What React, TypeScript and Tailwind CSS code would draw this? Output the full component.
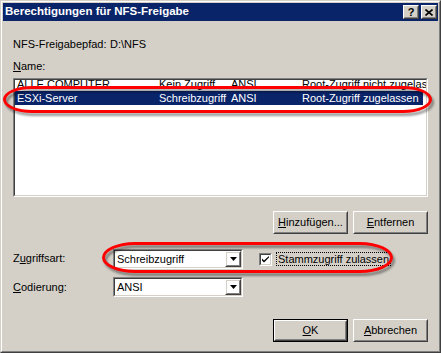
import React from "react";

const raisedOuter = "border border-t-white border-l-white border-r-[#404040] border-b-[#404040]";
const raisedInner = "border border-t-[#D4D0C8] border-l-[#D4D0C8] border-r-[#808080] border-b-[#808080]";
const sunkenOuter = "border border-t-[#808080] border-l-[#808080] border-r-white border-b-white";
const sunkenInner = "border border-t-[#404040] border-l-[#404040] border-r-[#D4D0C8] border-b-[#D4D0C8]";

function Btn({ children, isDefault }: { children: React.ReactNode; isDefault?: boolean }) {
  const inner = (
    <div className={`${raisedOuter} w-full h-full`}>
      <div className={`${raisedInner} w-full h-full flex items-center justify-center text-[11px] text-black`}>
        {children}
      </div>
    </div>
  );
  return (
    <div className={`w-[75px] h-[23px] ${isDefault ? "border border-black" : ""}`}>{inner}</div>
  );
}

function Arrow() {
  return (
    <div className={`${raisedOuter} w-[16px] h-[16px]`}>
      <div className={`${raisedInner} w-full h-full flex items-center justify-center`}>
        <svg width="7" height="4" viewBox="0 0 7 4">
          <path d="M0 0h7L3.5 4z" fill="#000" />
        </svg>
      </div>
    </div>
  );
}

function Combo({ value }: { value: string }) {
  return (
    <div className={`${sunkenOuter} w-[130px] h-[20px]`}>
      <div className={`${sunkenInner} w-full h-full bg-white flex items-center justify-between`}>
        <span className="pl-[2px] text-[11px] text-black leading-none">{value}</span>
        <Arrow />
      </div>
    </div>
  );
}

function TitleBtn({ children }: { children: React.ReactNode }) {
  return (
    <div className={`${raisedOuter} w-[16px] h-[14px] bg-[#D4D0C8]`}>
      <div className={`${raisedInner} w-full h-full flex items-center justify-center`}>{children}</div>
    </div>
  );
}

const rows = [
  { name: "ALLE COMPUTER", access: "Kein Zugriff", enc: "ANSI", root: "Root-Zugriff nicht zugelassen", sel: false },
  { name: "ESXi-Server", access: "Schreibzugriff", enc: "ANSI", root: "Root-Zugriff zugelassen", sel: true },
];

export default function App() {
  return (
    <div className="relative w-[441px] h-[353px] font-['Liberation_Sans',Arial,sans-serif] select-none">
      <div className="w-full h-full border border-t-[#D4D0C8] border-l-[#D4D0C8] border-r-[#404040] border-b-[#404040] bg-[#D4D0C8]">
        <div className="w-full h-full border border-t-white border-l-white border-r-[#808080] border-b-[#808080] p-px flex flex-col">
          {/* Title bar */}
          <div className="h-[18px] bg-[#0A246A] flex items-center justify-between pl-[2px] pr-[1px]">
            <span className="text-white font-bold text-[11.5px] leading-none">Berechtigungen für NFS-Freigabe</span>
            <div className="flex gap-[2px]">
              <TitleBtn>
                <span className="text-[11px] font-bold leading-none text-black">?</span>
              </TitleBtn>
              <TitleBtn>
                <svg width="8" height="7" viewBox="0 0 8 7">
                  <path d="M0.5 0.5L7.5 6.5M7.5 0.5L0.5 6.5" stroke="#000" strokeWidth="1.6" />
                </svg>
              </TitleBtn>
            </div>
          </div>

          {/* Body */}
          <div className="flex flex-col px-[10px] text-[11px] text-black">
            <div className="mt-[17px] h-[13px] leading-[13px] flex">
              <span className="w-[97px]">NFS-Freigabepfad:</span>
              <span>D:\NFS</span>
            </div>
            <div className="mt-[9px] h-[13px] leading-[13px]">
              <span className="underline">N</span>ame:
            </div>
            <div className={`mt-[5px] ${sunkenOuter} h-[119px] w-full`}>
              <div className={`${sunkenInner} w-full h-full bg-white overflow-hidden`}>
                <div className="-mt-[3px]">
                  {rows.map((r) => (
                    <div
                      key={r.name}
                      className={`grid grid-cols-[142px_72px_71px_1fr] pl-[2px] h-[14px] leading-[14px] whitespace-nowrap ${
                        r.sel ? "bg-[#0A246A] text-white mr-[3px]" : "text-black"
                      }`}
                    >
                      <span>{r.name}</span>
                      <span>{r.access}</span>
                      <span>{r.enc}</span>
                      <span>{r.root}</span>
                    </div>
                  ))}
                </div>
              </div>
            </div>

            <div className="mt-[14px] flex justify-end gap-[5px]">
              <Btn>
                <span><span className="underline">H</span>inzufügen...</span>
              </Btn>
              <Btn>
                <span><span className="underline">E</span>ntfernen</span>
              </Btn>
            </div>

            <div className="mt-[15px] flex items-center h-[20px]">
              <span className="w-[100px] -mt-[2px]">
                Z<span className="underline">u</span>griffsart:
              </span>
              <Combo value="Schreibzugriff" />
              <div className={`ml-[16px] ${sunkenOuter} w-[13px] h-[13px]`}>
                <div className={`${sunkenInner} w-full h-full bg-white flex items-center justify-center`}>
                  <svg width="7" height="7" viewBox="0 0 7 7">
                    <path d="M0 2.5L0 4.5L2 6.5L7 1.5L7 0L2 4.5Z" fill="#000" />
                  </svg>
                </div>
              </div>
              <div className="ml-[4px] border border-dotted border-black px-[1px] h-[14px] leading-[12px]">
                Stammzugriff zulassen
              </div>
            </div>

            <div className="mt-[8px] flex items-center h-[20px]">
              <span className="w-[100px]">
                <span className="underline">C</span>odierung:
              </span>
              <Combo value="ANSI" />
            </div>

            <div className="mt-[22px] flex justify-end gap-[5px]">
              <Btn isDefault>
                <span><span className="underline">O</span>K</span>
              </Btn>
              <Btn>
                <span><span className="underline">A</span>bbrechen</span>
              </Btn>
            </div>
          </div>
        </div>
      </div>

      {/* Red annotation marks */}
      <div className="absolute left-[3px] top-[86px] w-[429px] h-[27px] border-[3px] border-[#FF0000] rounded-[30px/14px] drop-shadow-[2px_3px_1px_rgba(0,0,0,0.4)]" />
      <div className="absolute left-[102px] top-[242px] w-[291px] h-[31px] border-[3px] border-[#FF0000] rounded-[34px/16px] drop-shadow-[2px_3px_1px_rgba(0,0,0,0.4)]" />
    </div>
  );
}
